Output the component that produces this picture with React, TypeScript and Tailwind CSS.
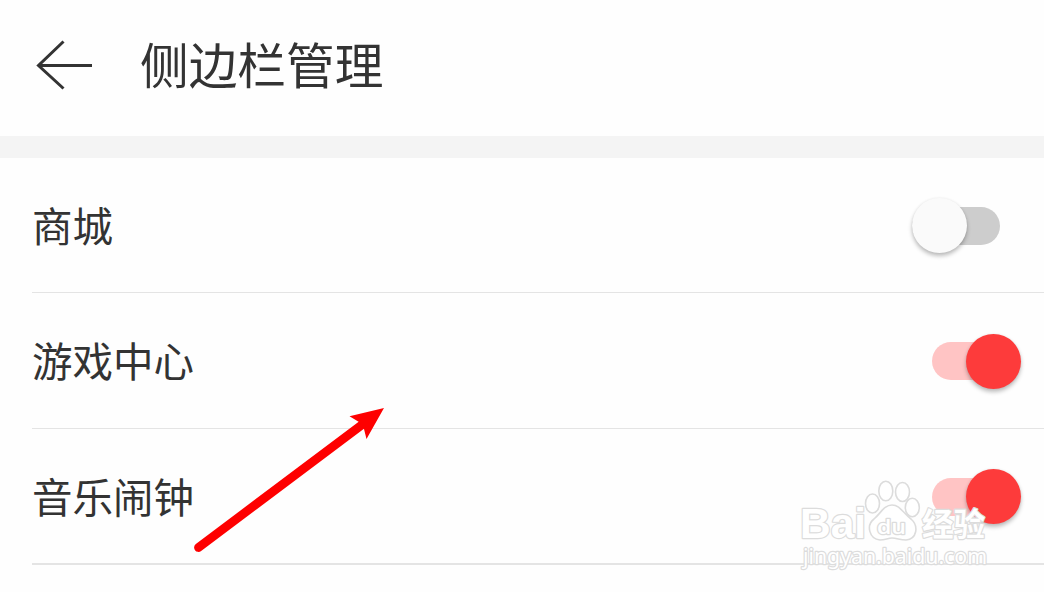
import clsx from "clsx";

type RowType = {
    label: string;
    enabled: boolean;
    className: string;
};

const rows: RowType[] = [
    { label: "商城", enabled: false, className: "h-[135px] border-b" },
    { label: "游戏中心", enabled: true, className: "h-34 border-b" },
    { label: "音乐闹钟", enabled: true, className: "h-34 border-b-2" },
];

const Toggle = ({ enabled, label }: { enabled: boolean; label: string }): JSX.Element => {
    return (
        <button
            role="switch"
            aria-checked={enabled}
            aria-label={label}
            className={clsx(
                "mt-px flex h-[38px] w-[88px] items-center rounded-full",
                enabled
                    ? "mr-[24px] justify-end bg-[#ffc4c4]"
                    : "mr-[44px] justify-start bg-[#cdcdcd]"
            )}
        >
            <span
                className={clsx(
                    "size-[55px] shrink-0 rounded-full shadow-[0_3px_4px_rgba(0,0,0,0.26),0_0_3px_rgba(0,0,0,0.06)]",
                    enabled ? "-mr-px bg-[#fd3b3b]" : "-ml-[0.5px] bg-[#fafafa]"
                )}
            />
        </button>
    );
};

const Row = ({ label, enabled, className }: RowType): JSX.Element => {
    return (
        <li
            className={clsx(
                "ml-8 flex items-center justify-between border-[#e4e4e4]",
                className
            )}
        >
            <span className="text-[40.5px] leading-none">{label}</span>
            <Toggle enabled={enabled} label={label} />
        </li>
    );
};

const Pointer = (): JSX.Element => (
    <svg
        className="pointer-events-none absolute left-[180px] top-[390px]"
        width="220"
        height="180"
        fill="#fe0000"
    >
        <path d="M18.5 157.5 183 34" stroke="#fe0000" strokeWidth="8.8" strokeLinecap="round" />
        <path d="M204 18 169.5 26.2 179 32 184 39 186.5 49Z" />
    </svg>
);

const Watermark = (): JSX.Element => (
    <svg
        className="pointer-events-none absolute left-[790px] top-[460px]"
        width="254"
        height="125"
        fill="#ffffff"
        stroke="#dcdcdc"
        strokeWidth="1.6"
        strokeLinejoin="round"
    >
        <ellipse cx="82.5" cy="43.5" rx="7" ry="9.5" />
        <ellipse cx="95.8" cy="31" rx="7" ry="9.8" />
        <ellipse cx="112.5" cy="32" rx="7" ry="9.5" />
        <ellipse cx="122.3" cy="47.5" rx="7" ry="9.2" />
        <path d="M102 45C94 45 91 53 84 59C76 65 79 79 90 80C95 80 98 78 102 78C107 78 110 80 116 80C127 79 129 66 121 59C113 53 110 45 102 45Z" />
        <g style={{ paintOrder: "stroke" }} strokeWidth="2.4">
            <text x="10" y="78" fontFamily="'Liberation Sans', sans-serif" fontSize="42" fontWeight="700" textLength="66" lengthAdjust="spacingAndGlyphs">
                Bai
            </text>
            <text x="87" y="73.5" fontFamily="'Open Sans', sans-serif" fontSize="20" fontWeight="600" textLength="29" lengthAdjust="spacingAndGlyphs">
                du
            </text>
            <text x="132" y="76" fontFamily="'Noto Sans CJK SC', sans-serif" fontSize="32" fontWeight="700" textLength="63" lengthAdjust="spacingAndGlyphs">
                经验
            </text>
            <text x="13" y="104" fontFamily="'Noto Sans', sans-serif" fontSize="21" textLength="184" lengthAdjust="spacingAndGlyphs">
                jingyan.baidu.com
            </text>
        </g>
    </svg>
);

const App = (): JSX.Element => {
    return (
        <main className="relative h-[592px] w-full overflow-hidden bg-[#fefefe] font-['Noto_Sans_CJK_SC',sans-serif] text-[#333333]">
            <header className="flex h-34 items-center pl-9 pb-1.5">
                <button aria-label="返回">
                    <svg
                        width="56"
                        height="50"
                        fill="none"
                        stroke="#333333"
                        strokeWidth="3"
                    >
                        <path d="M27.5 1.5 2.5 25.5 27.5 48.5M2 25.5H56" />
                    </svg>
                </button>
                <h1 className="ml-12 pb-1 text-[48.7px] leading-none">侧边栏管理</h1>
            </header>
            <div className="h-[22px] bg-[#f4f4f4]" />
            <ul>
                {rows.map((row) => (
                    <Row key={row.label} {...row} />
                ))}
            </ul>
            <Pointer />
            <Watermark />
        </main>
    );
};

export default App;
